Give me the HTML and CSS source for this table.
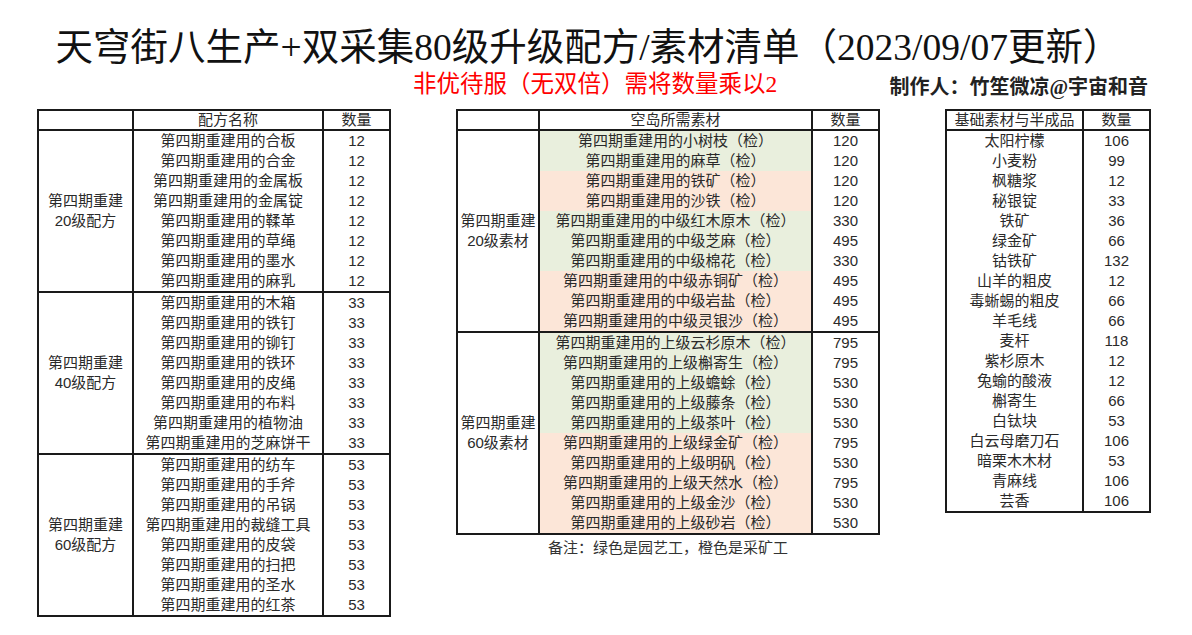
FILE: index.html
```html
<!DOCTYPE html>
<html lang="zh">
<head>
<meta charset="utf-8">
<title>天穹街八生产+双采集80级升级配方/素材清单</title>
<link rel="stylesheet" href="styles.css">
</head>
<body>
<div class="page">
  <h1 class="title">天穹街八生产+双采集80级升级配方/素材清单（2023/09/07更新）</h1>
  <div class="sub">
    <span class="warn">非优待服（无双倍）需将数量乘以2</span>
    <span class="author">制作人：竹笙微凉@宇宙和音</span>
  </div>
  <div class="tables">
    <table class="sheet t-left">
      <colgroup><col class="c-grp"><col class="c-name"><col class="c-num"></colgroup>
      <thead><tr><th></th><th>配方名称</th><th>数量</th></tr></thead>
      <tbody>
        <tr><td class="grp" rowspan="8">第四期重建<br>20级配方</td><td>第四期重建用的合板</td><td>12</td></tr>
        <tr><td>第四期重建用的合金</td><td>12</td></tr>
        <tr><td>第四期重建用的金属板</td><td>12</td></tr>
        <tr><td>第四期重建用的金属锭</td><td>12</td></tr>
        <tr><td>第四期重建用的鞣革</td><td>12</td></tr>
        <tr><td>第四期重建用的草绳</td><td>12</td></tr>
        <tr><td>第四期重建用的墨水</td><td>12</td></tr>
        <tr><td>第四期重建用的麻乳</td><td>12</td></tr>
      </tbody>
      <tbody>
        <tr><td class="grp" rowspan="8">第四期重建<br>40级配方</td><td>第四期重建用的木箱</td><td>33</td></tr>
        <tr><td>第四期重建用的铁钉</td><td>33</td></tr>
        <tr><td>第四期重建用的铆钉</td><td>33</td></tr>
        <tr><td>第四期重建用的铁环</td><td>33</td></tr>
        <tr><td>第四期重建用的皮绳</td><td>33</td></tr>
        <tr><td>第四期重建用的布料</td><td>33</td></tr>
        <tr><td>第四期重建用的植物油</td><td>33</td></tr>
        <tr><td>第四期重建用的芝麻饼干</td><td>33</td></tr>
      </tbody>
      <tbody>
        <tr><td class="grp" rowspan="8">第四期重建<br>60级配方</td><td>第四期重建用的纺车</td><td>53</td></tr>
        <tr><td>第四期重建用的手斧</td><td>53</td></tr>
        <tr><td>第四期重建用的吊锅</td><td>53</td></tr>
        <tr><td>第四期重建用的裁缝工具</td><td>53</td></tr>
        <tr><td>第四期重建用的皮袋</td><td>53</td></tr>
        <tr><td>第四期重建用的扫把</td><td>53</td></tr>
        <tr><td>第四期重建用的圣水</td><td>53</td></tr>
        <tr><td>第四期重建用的红茶</td><td>53</td></tr>
      </tbody>
    </table>

    <div class="mid">
      <table class="sheet t-mid">
        <colgroup><col class="c-grp2"><col class="c-name2"><col class="c-num"></colgroup>
        <thead><tr><th></th><th>空岛所需素材</th><th>数量</th></tr></thead>
        <tbody>
          <tr><td class="grp" rowspan="10">第四期重建<br>20级素材</td><td class="g">第四期重建用的小树枝（检）</td><td>120</td></tr>
          <tr><td class="g">第四期重建用的麻草（检）</td><td>120</td></tr>
          <tr><td class="o">第四期重建用的铁矿（检）</td><td>120</td></tr>
          <tr><td class="o">第四期重建用的沙铁（检）</td><td>120</td></tr>
          <tr><td class="g">第四期重建用的中级红木原木（检）</td><td>330</td></tr>
          <tr><td class="g">第四期重建用的中级芝麻（检）</td><td>495</td></tr>
          <tr><td class="g">第四期重建用的中级棉花（检）</td><td>330</td></tr>
          <tr><td class="o">第四期重建用的中级赤铜矿（检）</td><td>495</td></tr>
          <tr><td class="o">第四期重建用的中级岩盐（检）</td><td>495</td></tr>
          <tr><td class="o">第四期重建用的中级灵银沙（检）</td><td>495</td></tr>
        </tbody>
        <tbody>
          <tr><td class="grp" rowspan="10">第四期重建<br>60级素材</td><td class="g">第四期重建用的上级云杉原木（检）</td><td>795</td></tr>
          <tr><td class="g">第四期重建用的上级槲寄生（检）</td><td>795</td></tr>
          <tr><td class="g">第四期重建用的上级蟾蜍（检）</td><td>530</td></tr>
          <tr><td class="g">第四期重建用的上级藤条（检）</td><td>530</td></tr>
          <tr><td class="g">第四期重建用的上级茶叶（检）</td><td>530</td></tr>
          <tr><td class="o">第四期重建用的上级绿金矿（检）</td><td>795</td></tr>
          <tr><td class="o">第四期重建用的上级明矾（检）</td><td>530</td></tr>
          <tr><td class="o">第四期重建用的上级天然水（检）</td><td>795</td></tr>
          <tr><td class="o">第四期重建用的上级金沙（检）</td><td>530</td></tr>
          <tr><td class="o">第四期重建用的上级砂岩（检）</td><td>530</td></tr>
        </tbody>
      </table>
      <p class="caption">备注：绿色是园艺工，橙色是采矿工</p>
    </div>

    <table class="sheet t-right">
      <colgroup><col class="c-base"><col class="c-num"></colgroup>
      <thead><tr><th>基础素材与半成品</th><th>数量</th></tr></thead>
      <tbody>
        <tr><td>太阳柠檬</td><td>106</td></tr>
        <tr><td>小麦粉</td><td>99</td></tr>
        <tr><td>枫糖浆</td><td>12</td></tr>
        <tr><td>秘银锭</td><td>33</td></tr>
        <tr><td>铁矿</td><td>36</td></tr>
        <tr><td>绿金矿</td><td>66</td></tr>
        <tr><td>钴铁矿</td><td>132</td></tr>
        <tr><td>山羊的粗皮</td><td>12</td></tr>
        <tr><td>毒蜥蜴的粗皮</td><td>66</td></tr>
        <tr><td>羊毛线</td><td>66</td></tr>
        <tr><td>麦杆</td><td>118</td></tr>
        <tr><td>紫杉原木</td><td>12</td></tr>
        <tr><td>兔蝓的酸液</td><td>12</td></tr>
        <tr><td>槲寄生</td><td>66</td></tr>
        <tr><td>白钛块</td><td>53</td></tr>
        <tr><td>白云母磨刀石</td><td>106</td></tr>
        <tr><td>暗栗木木材</td><td>53</td></tr>
        <tr><td>青麻线</td><td>106</td></tr>
        <tr><td>芸香</td><td>106</td></tr>
      </tbody>
    </table>
  </div>
</div>
</body>
</html>
```

FILE: styles.css
```css
html, body {
  margin: 0;
  padding: 0;
  background: #ffffff;
}

.page {
  width: 1192px;
  height: 635px;
  padding-top: 28px;
  box-sizing: border-box;
  font-family: "Liberation Serif", "Noto Sans CJK SC", serif;
  color: #111111;
}

.title {
  margin: 0;
  padding-right: 16px;
  height: 40px;
  line-height: 40px;
  font-size: 37.5px;
  font-weight: normal;
  text-align: center;
  white-space: nowrap;
}

.sub {
  display: flex;
  justify-content: space-between;
  align-items: center;
  margin-top: 2px;
  height: 30px;
  padding: 0 44px 0 413px;
}

.warn {
  color: #ff0000;
  font-size: 23.5px;
  line-height: 26px;
  margin-top: -3px;
}

.author {
  font-size: 20px;
  line-height: 24px;
  font-weight: 600;
  color: #222222;
  margin-top: 3px;
}

.tables {
  display: flex;
  align-items: flex-start;
  gap: 65px;
  margin-top: 9px;
  padding-left: 37px;
}

.sheet {
  border-collapse: collapse;
  table-layout: fixed;
  border: 2px solid #1a1a1a;
  font-family: "Liberation Sans", "Noto Sans CJK SC", sans-serif;
  font-size: 15px;
  color: #2a2a2a;
}

.sheet th,
.sheet td {
  padding: 0;
  height: 20px;
  line-height: 20px;
  text-align: center;
  font-weight: normal;
  white-space: nowrap;
  border-left: 2px solid #1a1a1a;
  border-right: 2px solid #1a1a1a;
  overflow: hidden;
}

.sheet thead th {
  height: 18px;
  line-height: 18px;
  border-bottom: 2px solid #1a1a1a;
}

.sheet tbody + tbody tr:first-child td {
  height: 19px;
  border-top: 2px solid #1a1a1a;
}

.sheet td.grp {
  vertical-align: middle;
  line-height: 20px;
  background: #ffffff;
}

.t-left { width: 352px; }
.t-mid { width: 422px; }
.t-right { width: 204px; }

.c-grp { width: 95px; }
.c-name { width: 190px; }
.c-num { width: 67px; }
.c-grp2 { width: 82px; }
.c-name2 { width: 273px; }
.c-base { width: 137px; }

.sheet td.g { background: #e9efdd; }
.sheet td.o { background: #fce6d8; }

.mid {
  display: flex;
  flex-direction: column;
  align-items: center;
}

.caption {
  margin: 3px 0 0;
  line-height: 20px;
  font-family: "Liberation Sans", "Noto Sans CJK SC", sans-serif;
  font-size: 15px;
  color: #333333;
}
```
